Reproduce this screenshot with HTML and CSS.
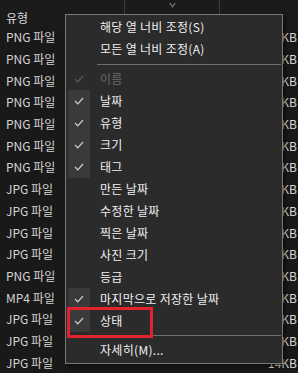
FILE: index.html
```html
<!DOCTYPE html>
<html>
<head>
  <meta charset="utf-8">
  <link rel="stylesheet" href="styles.css">
</head>
<body>
  <div class="list">
	<div class="list-header">
	  <div class="col col-type">유형</div>
	  <div class="col col-date"><span class="sort-arrow"></span></div>
	  <div class="col col-rest"></div>
	</div>
	<div class="row"><span class="type">PNG 파일</span><span class="size">1,204KB</span></div>
	<div class="row"><span class="type">PNG 파일</span><span class="size">988KB</span></div>
	<div class="row"><span class="type">PNG 파일</span><span class="size">1,532KB</span></div>
	<div class="row"><span class="type">PNG 파일</span><span class="size">742KB</span></div>
	<div class="row"><span class="type">PNG 파일</span><span class="size">2,018KB</span></div>
	<div class="row"><span class="type">PNG 파일</span><span class="size">655KB</span></div>
	<div class="row"><span class="type">PNG 파일</span><span class="size">1,111KB</span></div>
	<div class="row"><span class="type">JPG 파일</span><span class="size">348KB</span></div>
	<div class="row"><span class="type">JPG 파일</span><span class="size">412KB</span></div>
	<div class="row"><span class="type">JPG 파일</span><span class="size">287KB</span></div>
	<div class="row"><span class="type">JPG 파일</span><span class="size">503KB</span></div>
	<div class="row"><span class="type">PNG 파일</span><span class="size">876KB</span></div>
	<div class="row"><span class="type">MP4 파일</span><span class="size">9,340KB</span></div>
	<div class="row"><span class="type">JPG 파일</span><span class="size">224KB</span></div>
	<div class="row"><span class="type">JPG 파일</span><span class="size">198KB</span></div>
	<div class="row"><span class="type">JPG 파일</span><span class="size">14KB</span></div>
  </div>

  <div class="menu">
	<div class="item"><span class="check"></span><span class="label">해당 열 너비 조정(S)</span></div>
	<div class="item"><span class="check"></span><span class="label">모든 열 너비 조정(A)</span></div>
	<div class="separator"></div>
	<div class="item disabled"><span class="check"><svg viewBox="0 0 10 8"><polyline points="1,4 3.8,6.8 9,1"/></svg></span><span class="label">이름</span></div>
	<div class="item checked"><span class="check"><svg viewBox="0 0 10 8"><polyline points="1,4 3.8,6.8 9,1"/></svg></span><span class="label">날짜</span></div>
	<div class="item checked"><span class="check"><svg viewBox="0 0 10 8"><polyline points="1,4 3.8,6.8 9,1"/></svg></span><span class="label">유형</span></div>
	<div class="item checked"><span class="check"><svg viewBox="0 0 10 8"><polyline points="1,4 3.8,6.8 9,1"/></svg></span><span class="label">크기</span></div>
	<div class="item checked"><span class="check"><svg viewBox="0 0 10 8"><polyline points="1,4 3.8,6.8 9,1"/></svg></span><span class="label">태그</span></div>
	<div class="item"><span class="check"></span><span class="label">만든 날짜</span></div>
	<div class="item"><span class="check"></span><span class="label">수정한 날짜</span></div>
	<div class="item"><span class="check"></span><span class="label">찍은 날짜</span></div>
	<div class="item"><span class="check"></span><span class="label">사진 크기</span></div>
	<div class="item"><span class="check"></span><span class="label">등급</span></div>
	<div class="item checked"><span class="check"><svg viewBox="0 0 10 8"><polyline points="1,4 3.8,6.8 9,1"/></svg></span><span class="label">마지막으로 저장한 날짜</span></div>
	<div class="item checked highlighted"><span class="check"><svg viewBox="0 0 10 8"><polyline points="1,4 3.8,6.8 9,1"/></svg></span><span class="label">상태</span></div>
	<div class="separator"></div>
	<div class="item"><span class="check"></span><span class="label">자세히(M)...</span></div>
	<div class="annotation"></div>
  </div>
</body>
</html>
```

FILE: styles.css
```css
:root {
  --color-bg: #191919;
  --color-text: #d4d4d4;
  --color-menu: #2b2b2b;
  --color-menu-border: #7a7a7a;
  --color-menu-text: #f0f0f0;
  --color-check-bg: #3a3a3a;
  --color-red: #e0232d;
  --row-height: 21.7px;
}

body, html {
  margin: 0;
  padding: 0;
  width: 100%;
  height: 100%;
  overflow: hidden;
  background: var(--color-bg);
  font-family: "Noto Sans CJK KR", "Noto Sans", sans-serif;
  font-size: 12px;
  color: var(--color-text);
}

.list {
  display: flex;
  flex-direction: column;
}

.list-header {
  display: flex;
  height: 26px;
  background: #1b1b1b;
}

.col {
  box-sizing: border-box;
  border-right: 1px solid #3c3c3c;
  position: relative;
}

.col-type {
  width: 125px;
  padding: 10px 0 0 6px;
  line-height: 16px;
  color: #dcdcdc;
}

.col-date {
  width: 95px;
  display: flex;
  justify-content: center;
}

.col-rest {
  flex: 1;
  border-right: none;
}

.sort-arrow {
  margin-top: 1px;
  width: 4px;
  height: 4px;
  border-right: 1px solid #8c8c8c;
  border-bottom: 1px solid #8c8c8c;
  transform: rotate(45deg) skew(8deg, 8deg);
}

.row {
  display: flex;
  justify-content: space-between;
  align-items: center;
  flex-shrink: 0;
  height: var(--row-height);
  padding: 0 1px 0 6px;
  white-space: nowrap;
}

.size {
  color: #d8d8d8;
}

.menu {
  position: absolute;
  left: 65px;
  top: 14px;
  width: 218px;
  box-sizing: border-box;
  padding: 1px 0 2px;
  background: var(--color-menu);
  border: 1px solid var(--color-menu-border);
  box-shadow: 2px 2px 4px rgba(0, 0, 0, 0.6);
  color: var(--color-menu-text);
}

.item {
  display: flex;
  align-items: center;
  height: 22px;
  white-space: nowrap;
}

.check {
  width: 22px;
  height: 22px;
  margin: 0 10px 0 2px;
  display: flex;
  align-items: center;
  justify-content: center;
}

.check svg {
  width: 10px;
  height: 8px;
  fill: none;
  stroke: #cfcfcf;
  stroke-width: 1.2;
}

.item.checked .check {
  background: var(--color-check-bg);
}

.item.disabled {
  color: #6a6a6a;
}

.item.disabled .check svg {
  stroke: #5a5a5a;
}

.label {
  line-height: 16px;
  letter-spacing: 0.3px;
}

.separator {
  height: 1px;
  margin: 4px 1px 3px 31px;
  background: #6e6e6e;
}

.highlighted + .separator {
  margin: 3px 1px 3px 31px;
}

.annotation {
  position: absolute;
  left: 1px;
  top: 292px;
  width: 86px;
  height: 31px;
  box-sizing: border-box;
  border: 3px solid var(--color-red);
}
```
